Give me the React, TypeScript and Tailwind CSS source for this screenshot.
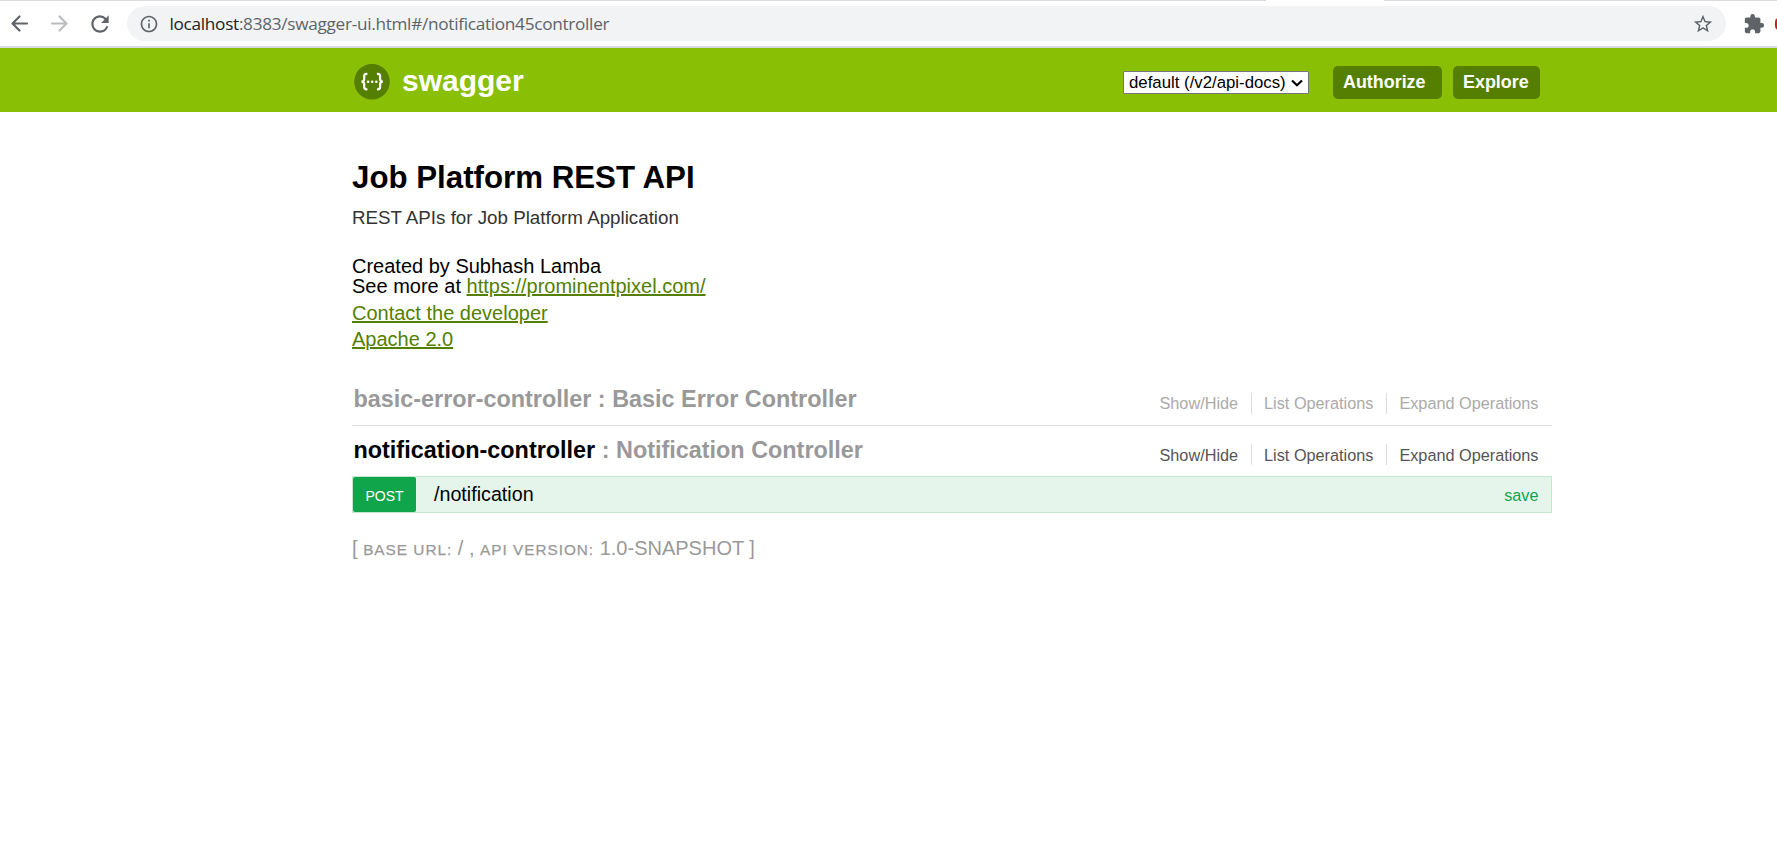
import { MdExtension, MdInfoOutline, MdRefresh, MdStarBorder } from "react-icons/md";

function ArrowIcon({ className }: { className: string }) {
  return (
    <svg
      className={`size-[25px] shrink-0 ${className}`}
      viewBox="0 0 25 25"
      fill="none"
      stroke="currentColor"
      strokeWidth="2.2"
      strokeLinecap="round"
      strokeLinejoin="round"
    >
      <path d="M12.5 5.5 5.5 12.5 12.5 19.5M5.5 12.5H20" />
    </svg>
  );
}

function BrowserBar() {
  return (
    <div className="h-12 bg-white flex flex-col overflow-hidden">
      <div className="flex h-px shrink-0">
        <div className="w-[1266px] bg-[#dadce0]" />
        <div className="w-[118px]" />
        <div className="flex-1 bg-[#dadce0]" />
      </div>
      <div className="flex h-[45px] shrink-0 items-center text-[#5f6368]">
        <ArrowIcon className="ml-[7px]" />
        <ArrowIcon className="ml-[15px] rotate-180 text-[#babcbe]" />
        <MdRefresh className="ml-[15px] size-[26px] shrink-0" />
        <div className="ml-[14px] flex h-[35px] w-[1599px] shrink-0 items-center rounded-full bg-[#f1f3f4]">
          <MdInfoOutline className="ml-[12px] size-[20px] shrink-0" />
          <div className="ml-[10.5px] whitespace-nowrap font-['Open_Sans',sans-serif] text-[17.2px] tracking-[-0.29px] leading-[24px]">
            <span className="text-[#202124]">localhost</span>:8383/swagger-ui.html#/notification45controller
          </div>
          <MdStarBorder className="ml-auto mr-[12px] size-[22px] shrink-0" />
        </div>
        <MdExtension className="ml-[17px] size-[22px] shrink-0" />
        <div className="ml-[10px] h-[12px] w-[20px] shrink-0 rounded-l-sm bg-[#c5221f]" />
      </div>
      <div className="h-[2px] shrink-0 bg-[#dadce4]" />
    </div>
  );
}

function Logo() {
  return (
    <svg className="mt-[3px] size-9 shrink-0" viewBox="0 0 36 36" fill="none">
      <circle cx="18" cy="17.7" r="17.8" fill="#547f00" />
      <g stroke="#fff" strokeWidth="2.2">
        <path d="M13.4 9.8h-.8c-1.7 0-2.4.8-2.4 2.3v2.9c0 1.6-.8 2.6-2.8 2.6 2 0 2.8 1 2.8 2.6v2.9c0 1.5.7 2.3 2.4 2.3h.8" />
        <path d="M22.9 9.8h.8c1.7 0 2.4.8 2.4 2.3v2.9c0 1.6.8 2.6 2.8 2.6-2 0-2.8 1-2.8 2.6v2.9c0 1.5-.7 2.3-2.4 2.3h-.8" />
      </g>
      <g fill="#fff">
        <circle cx="14.1" cy="17.7" r="1.3" />
        <circle cx="18.2" cy="17.7" r="1.3" />
        <circle cx="22.3" cy="17.7" r="1.3" />
      </g>
    </svg>
  );
}

function Header() {
  return (
    <header className="flex h-16 items-center bg-[#89bf04] pl-[354px] pr-[237px]">
      <Logo />
      <span className="ml-3 mt-px text-[30px] font-bold leading-[41px] text-white">swagger</span>
      <div className="ml-auto mt-[5px] flex items-center">
        <div className="mr-6 flex h-[23px] w-[186px] items-center rounded-[1px] border border-[#767676] bg-white pl-[5px] text-[16.8px] leading-[21px] text-black">
          <span className="whitespace-nowrap">default (/v2/api-docs)</span>
          <svg className="ml-auto mr-[5px] h-[8px] w-[12px]" viewBox="0 0 12 8" fill="none" stroke="#000" strokeWidth="2.2">
            <path d="M1 1.5 6 6.3 11 1.5" />
          </svg>
        </div>
        <button className="flex h-[33px] w-[109px] rounded-[5px] bg-[#547f00] pl-[10px] text-[17.9px] font-bold leading-[32px] text-white">
          Authorize
        </button>
        <button className="ml-[11px] flex h-[33px] w-[87px] rounded-[5px] bg-[#547f00] pl-[10px] text-[17.9px] font-bold leading-[32px] text-white">
          Explore
        </button>
      </div>
    </header>
  );
}

function Operations({ className }: { className: string }) {
  return (
    <ul className={`ml-auto flex h-[21px] text-[16.25px] ${className}`}>
      <li className="px-[12.5px]">Show/Hide</li>
      <li className="border-l border-[#ddd] px-[12.5px]">List Operations</li>
      <li className="border-l border-[#ddd] pl-[12.5px] pr-[13.5px]">Expand Operations</li>
    </ul>
  );
}

export default function App() {
  return (
    <div className="h-[855px] overflow-hidden bg-white font-['Liberation_Sans',Arial,sans-serif] text-black">
      <BrowserBar />
      <Header />
      <main className="ml-[352px] w-[1200px] pt-[45px]">
        <h1 className="text-[31.25px] font-bold leading-[41px]">Job Platform REST API</h1>
        <p className="mt-[10px] text-[18.75px] leading-[19px] text-[#333]">REST APIs for Job Platform Application</p>
        <div className="mt-[29px] text-[20px] leading-[20px]">
          <div>Created by Subhash Lamba</div>
          <div>
            See more at <a className="text-[#547f00] underline">https://prominentpixel.com/</a>
          </div>
          <div className="mt-[7px]">
            <a className="text-[#547f00] underline">Contact the developer</a>
          </div>
          <div className="mt-[6px]">
            <a className="text-[#547f00] underline">Apache 2.0</a>
          </div>
        </div>

        <section className="mt-[30px]">
          <div className="flex h-[47px] items-start border-b border-[#ddd]">
            <h2 className="pl-[1.5px] text-[23.4px] font-bold leading-[40px] text-[#999]">basic-error-controller : Basic Error Controller</h2>
            <div className="ml-auto pt-[14px]">
              <Operations className="leading-[21px] text-[#aaa]" />
            </div>
          </div>
          <div className="flex h-[50px] items-start">
            <h2 className="pl-[1.5px] pt-[4px] text-[23.4px] font-bold leading-[40px] text-[#999]">
              <span className="text-black">notification-controller</span> : Notification Controller
            </h2>
            <div className="ml-auto pt-[18px]">
              <Operations className="leading-[22px] text-[#555]" />
            </div>
          </div>
          <div className="flex h-[37px] items-center border border-[#c3e8d1] bg-[#e5f5eb]">
            <span className="flex h-[35px] w-[63px] justify-center rounded-[2px] bg-[#10a54a] text-[14px] leading-[38px] text-white">POST</span>
            <span className="pl-[18px] text-[19.7px] leading-[35px]">/notification</span>
            <span className="ml-auto pr-[12.5px] pt-px text-[16.25px] leading-[35px] text-[#10a54a]">save</span>
          </div>
        </section>

        <footer className="mt-[23px] whitespace-nowrap text-[20px] leading-[24px] text-[#999]">
          [ <span className="text-[15.35px] tracking-[1px] [-webkit-text-stroke:0.25px_#999]">BASE URL:</span> / ,{" "}
          <span className="text-[15.3px] tracking-[1px] [-webkit-text-stroke:0.25px_#999]">API VERSION:</span> 1.0-SNAPSHOT ]
        </footer>
      </main>
    </div>
  );
}
